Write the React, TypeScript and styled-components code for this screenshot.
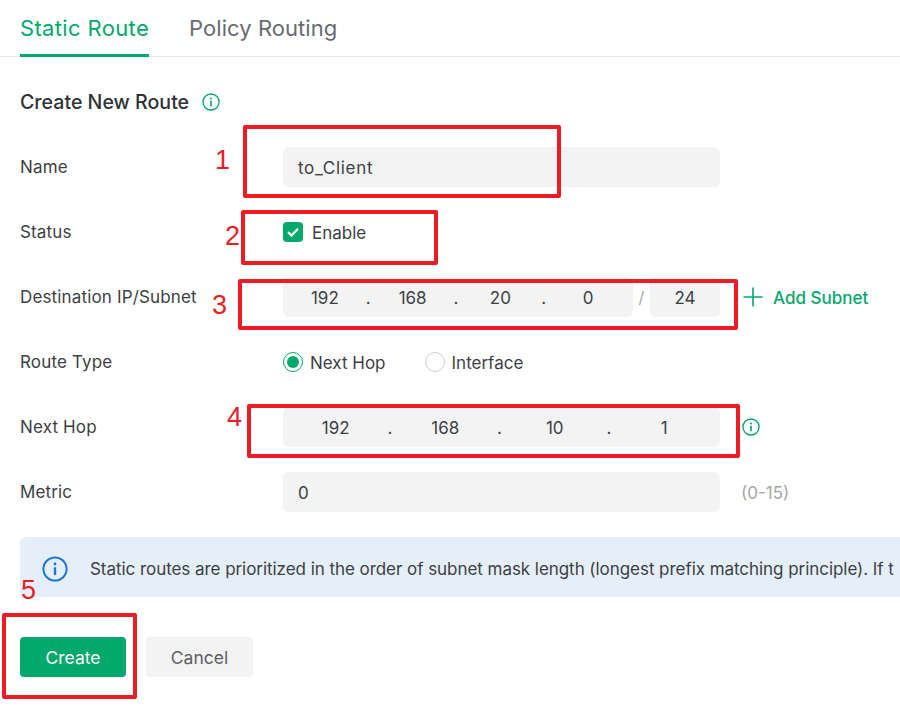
import { Fragment } from 'react';
import { createGlobalStyle, styled } from 'styled-components';

const GREEN = '#03a86d';

const GlobalStyle = createGlobalStyle`
  html, body {
    margin: 0;
    padding: 0;
    background: #ffffff;
    overflow: hidden;
  }
  body {
    font-family: Inter, "Noto Sans", "Liberation Sans", sans-serif;
    color: #3c3f45;
  }
`;

const InfoIcon = ({ size, color }: { size: number; color: string }) => (
  <svg width={size} height={size} viewBox="0 0 24 24" fill="none">
    <circle cx="12" cy="12" r="10.7" stroke={color} strokeWidth="1.8" />
    <circle cx="12" cy="7.4" r="1.3" fill={color} />
    <path d="M12 10.4v7.2" stroke={color} strokeWidth="2.2" />
  </svg>
);

const PlusIcon = () => (
  <svg width="20" height="20" viewBox="0 0 20 20" fill="none">
    <path d="M10 0.5v19M0.5 10h19" stroke={GREEN} strokeWidth="1.6" />
  </svg>
);

const CheckIcon = () => (
  <svg width="14" height="14" viewBox="0 0 14 14" fill="none">
    <path d="M2 7.2l3.5 3.3 6.4-6.6" stroke="#ffffff" strokeWidth="2.3" />
  </svg>
);

const IpField = ({ parts, label }: { parts: string[]; label: string }) => (
  <IpBox aria-label={label}>
    {parts.map((part, i) => (
      <Fragment key={i}>
        {i > 0 && <IpDot>.</IpDot>}
        <IpCell>{part}</IpCell>
      </Fragment>
    ))}
  </IpBox>
);

export default function App() {
  return (
    <Page>
      <GlobalStyle />
      <Tabs>
        <Tab $active>Static Route</Tab>
        <Tab>Policy Routing</Tab>
      </Tabs>

      <Title>
        Create New Route
        <InfoIcon size={18} color={GREEN} />
      </Title>

      <Form>
        <Row>
          <Label>Name</Label>
          <TextBox>to_Client</TextBox>
        </Row>
        <Row>
          <Label>Status</Label>
          <CheckWrap>
            <CheckBox>
              <CheckIcon />
            </CheckBox>
            <OptionText>Enable</OptionText>
          </CheckWrap>
        </Row>
        <Row>
          <Label>Destination IP/Subnet</Label>
          <Subnet>
            <IpField parts={['192', '168', '20', '0']} label="Destination IP" />
            <Slash>/</Slash>
            <MaskBox>24</MaskBox>
          </Subnet>
          <AddSubnet>
            <PlusIcon />
            <OptionText>Add Subnet</OptionText>
          </AddSubnet>
        </Row>
        <Row>
          <Label>Route Type</Label>
          <RadioGroup>
            <RadioItem>
              <Radio $checked />
              <OptionText>Next Hop</OptionText>
            </RadioItem>
            <RadioItem>
              <Radio />
              <OptionText>Interface</OptionText>
            </RadioItem>
          </RadioGroup>
        </Row>
        <Row>
          <Label>Next Hop</Label>
          <NextHop>
            <IpField parts={['192', '168', '10', '1']} label="Next hop" />
          </NextHop>
          <After>
            <InfoIcon size={18} color={GREEN} />
          </After>
        </Row>
        <Row>
          <Label>Metric</Label>
          <TextBox>0</TextBox>
          <Hint>(0-15)</Hint>
        </Row>
      </Form>

      <Notice>
        <InfoIcon size={26} color="#1a76d2" />
        <NoticeText>
          Static routes are prioritized in the order of subnet mask length (longest prefix
          matching principle). If t
        </NoticeText>
      </Notice>

      <Buttons>
        <PrimaryButton>Create</PrimaryButton>
        <SecondaryButton>Cancel</SecondaryButton>
      </Buttons>

      <Mark $left={243} $top={125} $width={318} $height={73} />
      <Mark $left={241} $top={210} $width={197} $height={55} />
      <Mark $left={238} $top={279} $width={500} $height={51} />
      <Mark $left={247} $top={404} $width={493} $height={54} />
      <Mark $left={2} $top={613} $width={135} $height={86} />
      <Num $left={215} $top={144}>1</Num>
      <Num $left={225} $top={220}>2</Num>
      <Num $left={212} $top={289}>3</Num>
      <Num $left={227} $top={401}>4</Num>
      <Num $left={21} $top={574}>5</Num>
    </Page>
  );
}

const Page = styled.div`
  position: relative;
  width: 900px;
  height: 708px;
  overflow: hidden;
  padding: 0 0 0 20px;
  box-sizing: border-box;
`;
const Tabs = styled.div`
  display: flex;
  gap: 40px;
  height: 57px;
  margin-left: -20px;
  padding-left: 20px;
  border-bottom: 1px solid #e8e8e8;
  box-sizing: border-box;
`;
const Tab = styled.div<{ $active?: boolean }>`
  height: 57px;
  box-sizing: border-box;
  padding-top: 13px;
  font-size: 22px;
  line-height: 30px;
  letter-spacing: ${(p) => (p.$active ? '0.35px' : '0.05px')};
  color: ${(p) => (p.$active ? GREEN : '#666a70')};
  border-bottom: ${(p) => (p.$active ? `3px solid ${GREEN}` : 'none')};
`;
const Title = styled.div`
  display: flex;
  align-items: center;
  gap: 13px;
  height: 30px;
  margin-top: 30px;
  font-size: 19.6px;
  font-weight: 500;
  color: #2f3238;
`;
const Form = styled.div`
  display: flex;
  flex-direction: column;
  gap: 25px;
  margin-top: 30px;
`;
const Row = styled.div`
  display: flex;
  align-items: center;
  height: 40px;
`;
const Label = styled.div`
  width: 263px;
  font-size: 17px;
  letter-spacing: 0.15px;
  color: #3c3f45;
`;
const OptionText = styled.span`
  padding-top: 2px;
`;
const Field = styled.div`
  height: 40px;
  padding-top: 2px;
  box-sizing: border-box;
  background: #f3f3f3;
  border-radius: 6px;
  display: flex;
  align-items: center;
  font-size: 17px;
  color: #3c3f45;
`;
const TextBox = styled(Field)`
  width: 437px;
  padding-left: 15px;
  letter-spacing: 0.7px;
`;
const Subnet = styled.div`
  display: flex;
  align-items: center;
  width: 437px;
`;
const NextHop = styled.div`
  width: 437px;
`;
const IpBox = styled(Field)`
  flex: 1;
  padding-right: 3px;
`;
const IpCell = styled.span`
  flex: 1;
  text-align: center;
`;
const IpDot = styled.span`
  width: 4px;
  margin: 0 1px 0 -1px;
  text-align: center;
`;
const Slash = styled.span`
  width: 17px;
  text-align: center;
  font-size: 16px;
  color: #a6a6a6;
`;
const MaskBox = styled(Field)`
  width: 70px;
  justify-content: center;
`;
const AddSubnet = styled.div`
  display: flex;
  align-items: center;
  gap: 10px;
  margin-left: 23px;
  font-size: 17px;
  font-weight: 500;
  color: ${GREEN};
`;
const After = styled.div`
  display: flex;
  margin-left: 22px;
`;
const Hint = styled.div`
  margin-left: 21px;
  padding-top: 2px;
  font-size: 17px;
  color: #a6a6a6;
`;
const CheckWrap = styled.div`
  display: flex;
  align-items: center;
  gap: 9px;
  font-size: 17px;
`;
const CheckBox = styled.span`
  width: 20px;
  height: 20px;
  border-radius: 4px;
  background: ${GREEN};
  display: flex;
  align-items: center;
  justify-content: center;
`;
const RadioGroup = styled.div`
  display: flex;
  gap: 39px;
`;
const RadioItem = styled.div`
  display: flex;
  align-items: center;
  gap: 7px;
  font-size: 17px;
`;
const Radio = styled.span<{ $checked?: boolean }>`
  width: 20px;
  height: 20px;
  box-sizing: border-box;
  border-radius: 50%;
  border: 1px solid ${(p) => (p.$checked ? GREEN : '#cfcfcf')};
  display: flex;
  align-items: center;
  justify-content: center;
  &::after {
    content: '';
    width: 12px;
    height: 12px;
    border-radius: 50%;
    background: ${(p) => (p.$checked ? GREEN : 'transparent')};
  }
`;
const Notice = styled.div`
  display: flex;
  align-items: center;
  gap: 22px;
  height: 60px;
  width: 900px;
  margin-top: 25px;
  padding: 4px 0 0 22px;
  box-sizing: border-box;
  background: #e5eff9;
  border-radius: 6px 0 0 6px;
`;
const NoticeText = styled.div`
  font-size: 17px;
  letter-spacing: -0.05px;
  white-space: nowrap;
  color: #3c3f45;
`;
const Buttons = styled.div`
  display: flex;
  gap: 20px;
  margin-top: 40px;
`;
const BaseButton = styled.button`
  height: 40px;
  border: none;
  border-radius: 4px;
  font-family: inherit;
  font-size: 17.5px;
`;
const PrimaryButton = styled(BaseButton)`
  width: 106px;
  background: ${GREEN};
  color: #ffffff;
`;
const SecondaryButton = styled(BaseButton)`
  width: 107px;
  background: #f3f3f3;
  color: #5c5f66;
`;
const Mark = styled.div<{ $left: number; $top: number; $width: number; $height: number }>`
  position: absolute;
  left: ${(p) => p.$left}px;
  top: ${(p) => p.$top}px;
  width: ${(p) => p.$width}px;
  height: ${(p) => p.$height}px;
  box-sizing: border-box;
  border: 4px solid #ed1c24;
  border-radius: 2px;
`;
const Num = styled.div<{ $left: number; $top: number }>`
  position: absolute;
  left: ${(p) => p.$left}px;
  top: ${(p) => p.$top}px;
  font-family: "Liberation Sans", sans-serif;
  font-size: 27px;
  line-height: 32px;
  color: #ed1c24;
`;
